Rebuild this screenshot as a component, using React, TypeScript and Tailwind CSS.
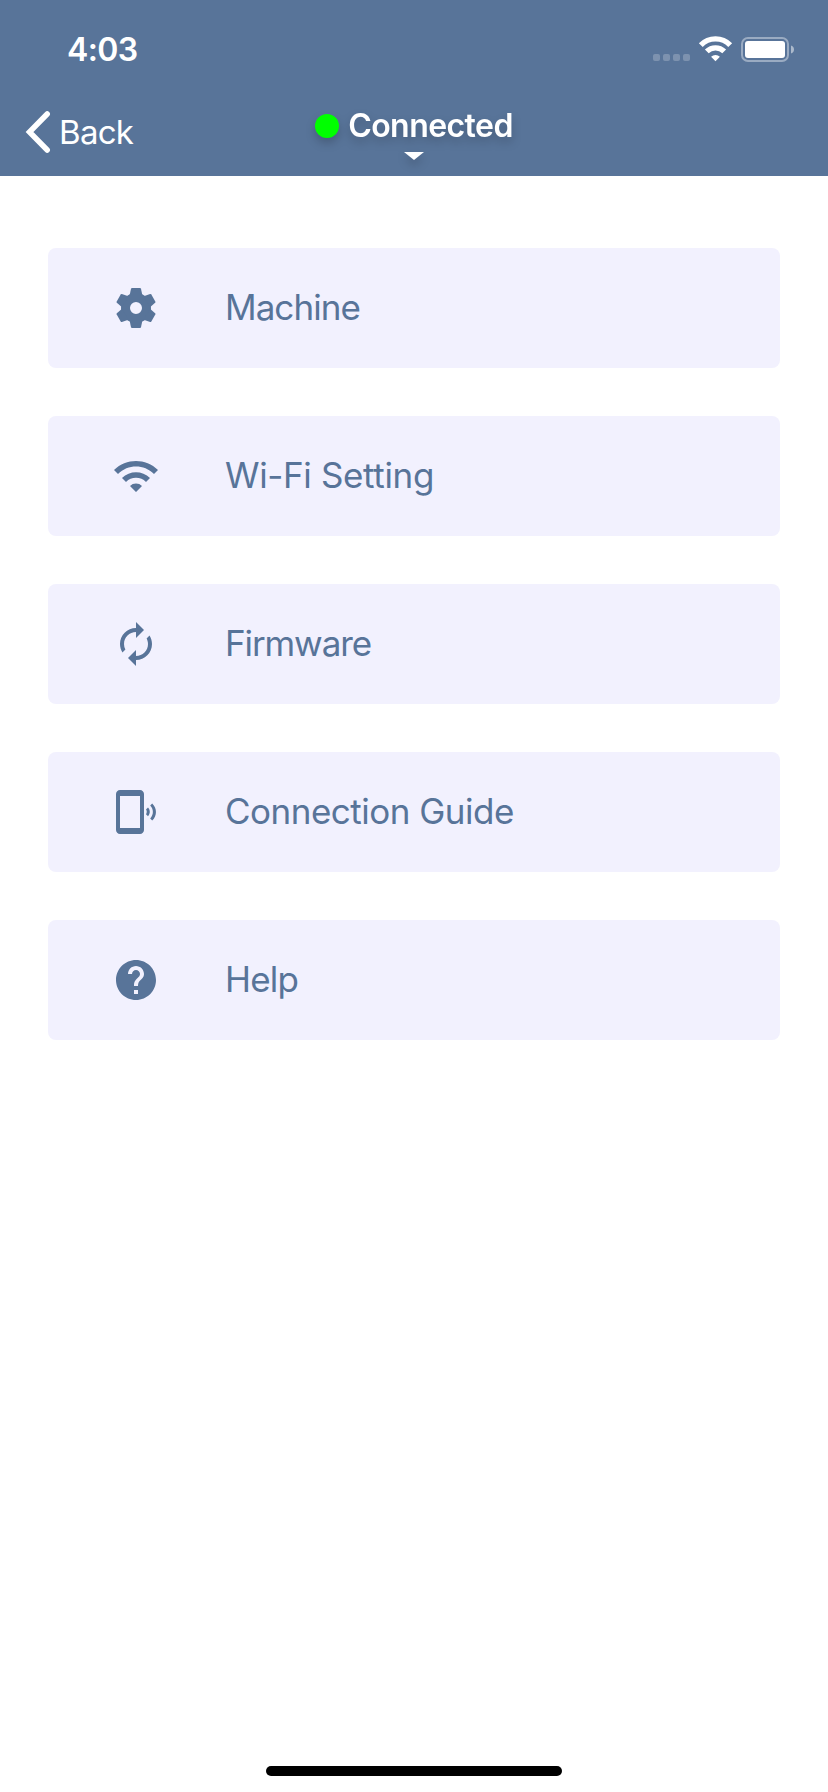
import type { ReactNode } from "react";
import { MdAutorenew, MdHelp, MdPhonelinkRing, MdWifi } from "react-icons/md";

function GearIcon() {
  return (
    <svg width="48" height="48" viewBox="-24 -24 48 48" fill="currentColor">
      <path
        fillRule="evenodd"
        d="M0-15A15 15 0 0 1 0 15A15 15 0 0 1 0-15ZM0-6A6 6 0 0 0 0 6A6 6 0 0 0 0-6Z"
      />
      {[0, 60, 120, 180, 240, 300].map((angle) => (
        <path
          key={angle}
          transform={`rotate(${angle})`}
          d="M-6.4-12.5L-5-19.2Q-4.8-20-4-20H4Q4.8-20 5-19.2L6.4-12.5Z"
        />
      ))}
    </svg>
  );
}

function StatusBar() {
  return (
    <div className="flex h-[88px] items-center justify-between pt-[12px] pr-[34px] pl-[67px]">
      <div className="text-[32px] leading-[40px] font-semibold tracking-[-0.6px]">4:03</div>
      <svg className="-mt-px" width="142" height="28" viewBox="0 0 142 28" fill="#fff">
        <g opacity="0.22">
          <rect x="1" y="18" width="7" height="7" rx="2" />
          <rect x="11" y="18" width="7" height="7" rx="2" />
          <rect x="21" y="18" width="7" height="7" rx="2" />
          <rect x="31" y="18" width="7" height="7" rx="2" />
        </g>
        <g fill="none" stroke="#fff" strokeWidth="5.400">
          <path d="M48.8 9.1A20.5 20.5 0 0 1 78.200 9.100" />
          <path d="M54.800 15.400A12.500 12.500 0 0 1 72.200 15.400" />
        </g>
        <path d="M63.500 25.200L59.100 20.800A6.300 6.300 0 0 1 67.900 20.800Z" />
        <rect x="90" y="2" width="46" height="23" rx="6" fill="none" stroke="#fff" strokeWidth="2" opacity="0.4" />
        <rect x="93" y="5" width="40" height="17" rx="3" />
        <path d="M139 9.500C141.500 10.500 142 12 142 13.500S141.500 16.500 139 17.500Z" opacity="0.5" />
      </svg>
    </div>
  );
}

function NavBar() {
  return (
    <div className="grid h-[88px] grid-cols-3">
      <div className="flex items-center pl-[25px]">
        <svg width="26" height="44" viewBox="0 0 26 44" fill="none" stroke="#fff" strokeWidth="5.500" strokeLinecap="round">
          <path d="M22.200 4L4.500 22L22.200 40" strokeLinejoin="miter" />
        </svg>
        <span className="ml-[8px] text-[33px] leading-[40px] tracking-[-0.700px]">Back</span>
      </div>
      <div className="flex flex-col items-center pt-[18px] drop-shadow-[0_5px_5px_rgba(0,0,0,0.2)]">
        <div className="flex items-center gap-[9px]">
          <span className="-mt-px h-6 w-6 rounded-full bg-[#00ff00]" />
          <span className="text-[32px] leading-[40px] font-semibold tracking-[-0.55px] whitespace-nowrap">Connected</span>
        </div>
        <svg className="mt-[6px]" width="20" height="8" viewBox="0 0 20 8" fill="#fff">
          <path d="M0 0H20L10 8Z" />
        </svg>
      </div>
    </div>
  );
}

function MenuRow({ icon, label, spacing }: { icon: ReactNode; label: string; spacing: string }) {
  return (
    <button className="flex h-[120px] w-full items-center rounded-[8px] bg-[#f2f1fe] text-left text-[#587499]">
      <span className="ml-16 flex h-12 w-12 items-center justify-center">{icon}</span>
      <span className={`ml-[65px] pb-[2px] text-[35px] leading-[44px] ${spacing}`}>{label}</span>
    </button>
  );
}

export default function App() {
  return (
    <div className="flex h-[1792px] w-[828px] flex-col bg-white font-['Inter','Liberation_Sans',sans-serif]">
      <header className="h-[176px] bg-[#587499] text-white">
        <StatusBar />
        <NavBar />
      </header>
      <main className="flex flex-1 flex-col gap-12 px-12 pt-[72px]">
        <MenuRow icon={<GearIcon />} label="Machine" spacing="tracking-[-0.95px]" />
        <MenuRow icon={<MdWifi size={48} />} label="Wi-Fi Setting" spacing="tracking-[-0.35px]" />
        <MenuRow icon={<MdAutorenew size={48} />} label="Firmware" spacing="tracking-[-1.1px]" />
        <MenuRow icon={<MdPhonelinkRing size={48} />} label="Connection Guide" spacing="tracking-[-0.5px]" />
        <MenuRow icon={<MdHelp size={48} />} label="Help" spacing="tracking-[-0.8px]" />
      </main>
      <footer className="flex justify-center pb-4">
        <div className="h-[10px] w-[296px] rounded-full bg-black" />
      </footer>
    </div>
  );
}
